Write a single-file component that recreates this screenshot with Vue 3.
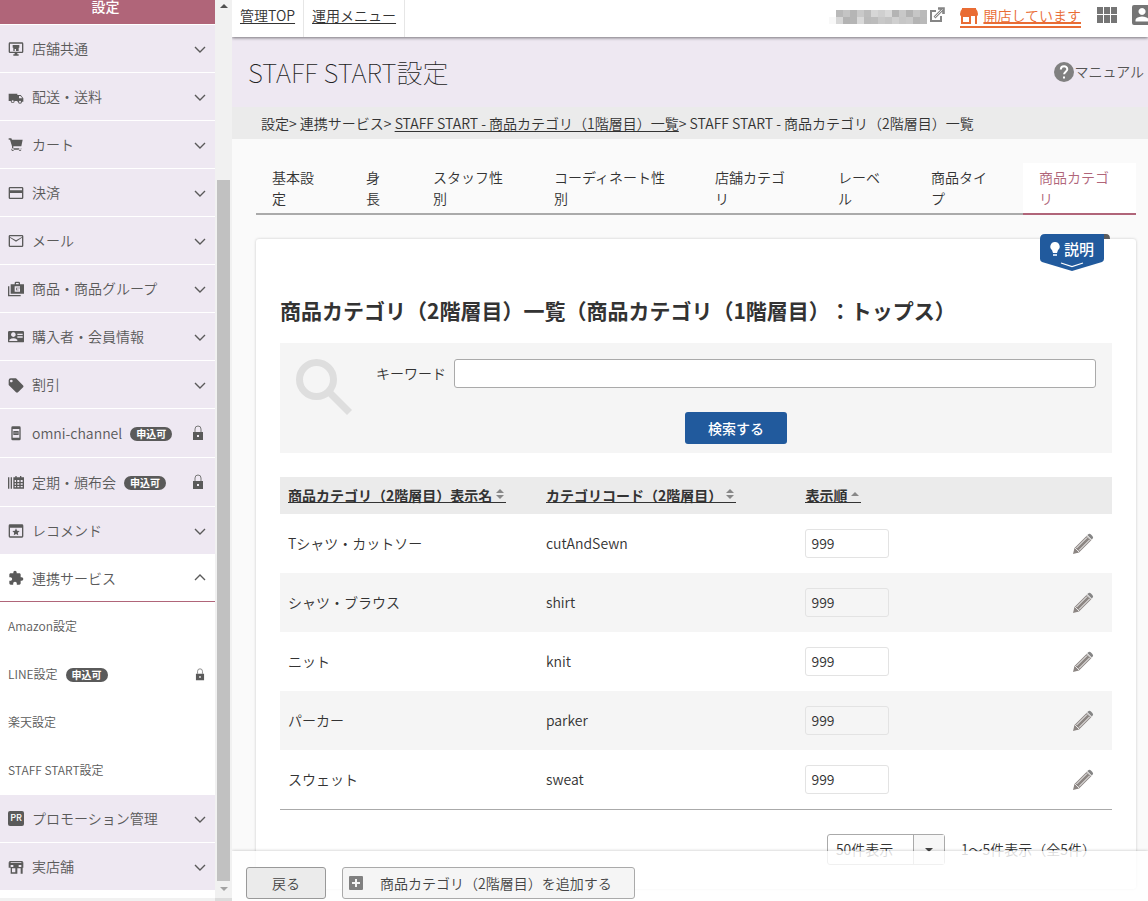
<script setup>
import { ref } from 'vue'

const upper = [
  { label: '店舗共通', icon: 'shop' },
  { label: '配送・送料', icon: 'truck' },
  { label: 'カート', icon: 'cart' },
  { label: '決済', icon: 'card' },
  { label: 'メール', icon: 'mail' },
  { label: '商品・商品グループ', icon: 'goods' },
  { label: '購入者・会員情報', icon: 'member' },
  { label: '割引', icon: 'tag' },
  { label: 'omni-channel', icon: 'phone', locked: true },
  { label: '定期・頒布会', icon: 'calendar', locked: true },
  { label: 'レコメンド', icon: 'star' },
  { label: '連携サービス', icon: 'puzzle', open: true },
]
const services = [
  { label: 'Amazon設定' },
  { label: 'LINE設定', locked: true },
  { label: '楽天設定' },
  { label: 'STAFF START設定' },
]
const lower = [
  { label: 'プロモーション管理', icon: 'pr' },
  { label: '実店舗', icon: 'store' },
]
const groups = [upper, lower]

const icons = {
  shop: 'M3 2h18q2 0 2 2v12q0 2-2 2h-7v2h2v2H8v-2h2v-2H3q-2 0-2-2V4q0-2 2-2zM3 4v12h18V4zM7 6h10v4h-1v5h-4v-3h-2v3H8v-5H7z',
  truck: 'M1 7h13v11h-4a3 3 0 0 1-6 0H1zM15 9h4l4 5v5h-2a3 3 0 0 1-6 0h-1V9zM16.500 10.500V14h5l-2.700-3.500zM5.500 18.500a1.500 1.500 0 1 0 3 0 1.500 1.500 0 0 0-3 0M16.500 19a1.500 1.500 0 1 0 3 0 1.500 1.500 0 0 0-3 0',
  cart: 'M1 2h4l1 2h16l-2 10H8v3h12v2H6v-5L3 4H1zM7 17a2 2 0 1 0 .1 0M18 17a2 2 0 1 0 .1 0',
  card: 'M3 3h18q2 0 2 2v14q0 2-2 2H3q-2 0-2-2V5q0-2 2-2zM3 5v3h18V5zM3 12v7h18v-7z',
  mail: 'M3 3h18q2 0 2 2v14q0 2-2 2H3q-2 0-2-2V5q0-2 2-2zM3 5v14h18V7l-9 6-9-6V6l9 5 9-5V5z',
  goods: 'M0 8h2v13h17v2H0zM4 5h6V3q0-2 2-2h4q2 0 2 2v2h6v14H4zM12 3v2h4V3zM10 8v8h8v-5h-5v2h3v1h-4v-4h6V8z',
  member: 'M2 3h20q2 0 2 2v14q0 1-2 1H2q-2 0-2-1V5q0-2 2-2zM8 5a3.500 3.500 0 1 0 .1 0M2 18h12v-2q-6-4-12 0zM14 7v2h8V7zM14 11v2h8v-2z',
  tag: 'M22 12 12 2H4Q1 2 1 5v7l11 11q1.500 1 3 0l8-8q1-1.500-1-3zM5 4a2 2 0 1 1-.1 0',
  phone: 'M7 2h10q2 0 2 2v17q0 2-2 2H7q-2 0-2-2V4q0-2 2-2zM7 6v13h10V6zM8 9h8v6H8zM10 11v2h1v-2zM13 11v2h1v-2z',
  calendar: 'M0 5h2v17H0zM4 5h2v17H4zM8 5h3V3h2v2h5V3h2v2h4v17H8zM10 9v3h2V9zM14 9v3h3V9zM19 9v3h3V9zM10 14v2h2v-2zM14 14v2h3v-2zM19 14v2h3v-2zM10 18v2h2v-2zM14 18v2h3v-2zM19 18v2h3v-2z',
  star: 'M3 2h18q2 0 2 2v16q0 2-2 2H3q-2 0-2-2V4q0-2 2-2zM3 7v13h18V7zM12 8l1.600 3.500 3.900.5-2.800 2.600.7 3.900-3.400-2-3.400 2 .7-3.900-2.800-2.600 3.900-.5z',
  puzzle: 'M20.500 11H19V7c0-1.100-.9-2-2-2h-4V3.500a2.500 2.500 0 0 0-5 0V5H4c-1.100 0-2 .9-2 2v3.800h1.500c1.500 0 2.700 1.200 2.700 2.700s-1.200 2.700-2.700 2.700H2V20c0 1.100.9 2 2 2h3.800v-1.500c0-1.500 1.200-2.700 2.700-2.700s2.700 1.200 2.700 2.700V22H17c1.100 0 2-.9 2-2v-4h1.500a2.500 2.500 0 0 0 0-5z',
  store: 'M2 3h20v2h1v8h-1v9h-3v-8h-5v8H4v-9H1V5h1zM4 5v1h16V5zM4 9v3h4V9zM16 9v3h4V9zM6 14v6h5v-6z',
}

const tabs = ['基本設定', '身長', 'スタッフ性別', 'コーディネート性別', '店舗カテゴリ', 'レーベル', '商品タイプ', '商品カテゴリ']

const rows = ref([
  { name: 'Tシャツ・カットソー', code: 'cutAndSewn', order: '999' },
  { name: 'シャツ・ブラウス', code: 'shirt', order: '999' },
  { name: 'ニット', code: 'knit', order: '999' },
  { name: 'パーカー', code: 'parker', order: '999' },
  { name: 'スウェット', code: 'sweat', order: '999' },
])
const keyword = ref('')
const mosaic = ['f2f2f2', 'b9b9b9', 'c4c4c4', 'b5b5b5', 'c9c9c9', 'bcbcbc', 'd6d6d6', 'cfcfcf', 'd9d9d9', 'b4b4b4', 'c8c8c8', 'b3b3b3', 'c6c6c6', 'bababa']
</script>

<template>
  <div class="shell">
    <nav class="sidebar" aria-label="設定">
      <div class="side-title">設定</div>
      <template v-for="(group, g) in groups" :key="g">
        <button
          v-for="item in group"
          :key="item.label"
          type="button"
          class="side-item"
          :class="{ locked: item.locked, open: item.open }"
        >
          <span v-if="item.icon === 'pr'" class="pr">PR</span>
          <svg v-else class="side-icon" viewBox="0 0 24 24" aria-hidden="true"><path fill-rule="evenodd" :d="icons[item.icon]" /></svg>
          <span>{{ item.label }}</span>
          <span v-if="item.locked" class="pill">申込可</span>
          <svg v-if="item.locked" class="lock" viewBox="0 0 12 16" aria-hidden="true">
            <path d="M3 7V4a3 3 0 0 1 6 0v3" fill="none" stroke="#777" />
            <path fill-rule="evenodd" d="M1 7h10v8H1zM5 10v2h2v-2z" />
          </svg>
          <svg v-else class="chevron" viewBox="0 0 12 8" aria-hidden="true"><path d="M1 2l5 5 5-5" /></svg>
        </button>
        <div v-if="g === 0" class="sub">
          <a v-for="s in services" :key="s.label" href="#" class="sub-item">
            <span>{{ s.label }}</span>
            <span v-if="s.locked" class="pill">申込可</span>
            <svg v-if="s.locked" class="lock small" viewBox="0 0 12 16" aria-hidden="true">
              <path d="M3 7V4a3 3 0 0 1 6 0v3" fill="none" stroke="#777" />
              <path fill-rule="evenodd" d="M1 7h10v8H1zM5 10v2h2v-2z" />
            </svg>
          </a>
        </div>
      </template>
      <div class="hbar"></div>
    </nav>
    <div class="scroll" aria-hidden="true">
      <svg viewBox="0 0 8 4"><path d="M0 4l4-4 4 4z" fill="#505050" /></svg>
      <div class="rail"><div class="thumb"></div></div>
      <svg viewBox="0 0 8 4"><path d="M0 0l4 4 4-4z" fill="#a3a3a3" /></svg>
      <div class="corner"></div>
    </div>

    <div class="main">
      <header class="topbar">
        <a href="#" class="nav-link">管理TOP</a>
        <a href="#" class="nav-link">運用メニュー</a>
        <div class="tools">
          <svg class="mosaic" width="98" height="14" viewBox="0 0 98 14" aria-hidden="true">
            <g v-for="(c, i) in mosaic" :key="i">
              <rect :x="i * 7" y="0" width="7" height="7" :fill="i ? '#' + c : '#fff'" />
              <rect :x="i * 7" y="7" width="7" height="7" :fill="i ? '#' + mosaic[(i * 5) % 13 + 1] : '#f8f8f8'" />
            </g>
          </svg>
          <svg class="external" viewBox="0 0 16 16" aria-hidden="true">
            <path d="M7 4H2v10h10V9" fill="none" stroke="#858585" stroke-width="2" />
            <path d="M5.500 10.500L14 2M9 1.500h5.500V7" fill="none" stroke="#858585" stroke-width="2.600" />
            <path d="M6 10l7.500-7.500" stroke="#fff" stroke-width=".8" />
          </svg>
          <a href="#" class="open-shop">
            <svg viewBox="0 0 18 16" aria-hidden="true"><path fill="#e96c34" fill-rule="evenodd" d="M2 0h14v1q2 2 2 5 0 2-1 2v8h-2V8h-4v8H1V8Q0 8 0 6q0-3 2-5zM3 9v5h6V9z" /></svg>
            <span>開店しています</span>
          </a>
          <svg class="apps" viewBox="0 0 20 16" aria-hidden="true"><path fill="#757575" d="M0 0h6v7H0zM7 0h6v7H7zM14 0h6v7h-6zM0 8h6v8H0zM7 8h6v8H7zM14 8h6v8h-6z" /></svg>
          <svg class="user" viewBox="0 0 20 20" aria-hidden="true"><path fill="#757575" fill-rule="evenodd" d="M2 0h16q2 0 2 2v16q0 2-2 2H2q-2 0-2-2V2q0-2 2-2zM10 3a3.500 3.500 0 1 0 .1 0zM3.500 16.500h13v-1.500q0-3-6.500-3.500-6.500.5-6.500 3.500z" /></svg>
        </div>
      </header>

      <div class="title-band">
        <h1>STAFF START設定</h1>
        <a href="#" class="manual">
          <svg viewBox="0 0 20 20" aria-hidden="true">
            <circle cx="10" cy="10" r="10" fill="#808080" />
            <path d="M6.800 7.500c0-4.300 6.500-4.300 6.500-.3 0 2.300-3.200 2.700-3.200 5" fill="none" stroke="#fff" stroke-width="2" />
            <path d="M9 14.500h2v2H9z" fill="#fff" />
          </svg>
          <span class="label">マニュアル</span>
        </a>
      </div>
      <div class="crumbs">設定&gt; 連携サービス&gt; <a href="#">STAFF START - 商品カテゴリ（1階層目）一覧</a>&gt; STAFF START - 商品カテゴリ（2階層目）一覧</div>

      <div class="content">
        <nav class="tabs" aria-label="STAFF START設定">
          <a v-for="(t, i) in tabs" :key="t" href="#" class="tab" :class="{ active: i === 7 }">{{ t }}</a>
        </nav>

        <section class="panel">
          <button type="button" class="explain">
            <svg viewBox="0 0 70 40" aria-hidden="true">
              <path d="M62 0h4q4 0 4 5h-8z" fill="#5c5c5c" />
              <path d="M5 0h59v25q0 2-2 3L32 37 2 28q-2-1-2-3V5q0-5 5-5z" fill="#215a9d" />
              <path d="M21 29l11 3.500L43 29" fill="none" stroke="#fff" stroke-width="1.200" />
              <path d="M15 8a4.500 4.500 0 0 0-3 8l1 3h4l1-3a4.500 4.500 0 0 0-3-8z" fill="#fff" />
              <path d="M13 20h4v2h-4z" fill="#c5d8ee" />
            </svg>
            <span>説明</span>
          </button>
          <h2>商品カテゴリ（2階層目）一覧（商品カテゴリ（1階層目）：トップス）</h2>

          <form class="search" @submit.prevent>
            <svg class="magnifier" viewBox="0 0 56 56" aria-hidden="true">
              <circle cx="20.500" cy="20.500" r="17" fill="none" stroke="#dedede" stroke-width="7" />
              <path d="M33 33l20.500 20.500" stroke="#dedede" stroke-width="7" />
            </svg>
            <div class="field">
              <label for="keyword" class="label">キーワード</label>
              <input id="keyword" v-model="keyword" type="text" />
            </div>
            <button type="submit" class="primary">検索する</button>
          </form>

          <table>
            <colgroup><col class="c1" /><col class="c2" /><col class="c2" /><col /></colgroup>
            <thead>
              <tr>
                <th scope="col"><a href="#">商品カテゴリ（2階層目）表示名<svg class="sort" viewBox="0 0 14 11" aria-hidden="true"><path d="M4 4l4-4 4 4zM4 6h8l-4 4z" /></svg></a></th>
                <th scope="col"><a href="#">カテゴリコード（2階層目）<svg class="sort" viewBox="0 0 14 11" aria-hidden="true"><path d="M4 4l4-4 4 4zM4 6h8l-4 4z" /></svg></a></th>
                <th scope="col"><a href="#">表示順<svg class="sort" viewBox="0 0 14 11" aria-hidden="true"><path d="M4 7l4-4 4 4z" /></svg></a></th>
                <th></th>
              </tr>
            </thead>
            <tbody>
              <tr v-for="r in rows" :key="r.code">
                <td><span class="label">{{ r.name }}</span></td>
                <td><span class="label">{{ r.code }}</span></td>
                <td><input v-model="r.order" type="text" :aria-label="r.name + ' 表示順'" /></td>
                <td class="edit">
                  <button type="button" :aria-label="r.name + ' 編集'">
                    <svg viewBox="0 0 22 22" aria-hidden="true">
                      <path d="M1 21l1.500-6L15 2.500l4.500 4.500L7 19.500z" fill="#8c8683" />
                      <path d="M4.500 15L15 4.500M7 17.500L17.500 7" stroke="#fff" stroke-width="1" />
                      <path d="M3 15.500L6.500 19l-3 .8-1.300-1.300z" fill="#8c8683" />
                      <path d="M3 15l4 4" stroke="#fff" stroke-width=".8" />
                      <path d="M16 1.500q1.500-1.500 3.200.2l1.200 1.200q1.500 1.500 0 3l-.6.6L15.300 2z" fill="#858585" />
                      <path d="M14.500 2.800L19 7.300" stroke="#fff" stroke-width=".7" />
                    </svg>
                  </button>
                </td>
              </tr>
            </tbody>
          </table>

          <div class="pager">
            <div class="select">
              <select aria-label="表示件数"><option>50件表示</option></select>
              <span class="arrow"><svg viewBox="0 0 8 4" aria-hidden="true"><path d="M0 0h8l-4 4z" /></svg></span>
            </div>
            <span class="label">1～5件表示（全5件）</span>
          </div>
        </section>
      </div>

      <footer class="actions">
        <button type="button" class="back">戻る</button>
        <button type="button" class="add">
          <svg viewBox="0 0 14 14" aria-hidden="true"><path fill="#808080" fill-rule="evenodd" d="M1 0h12q1 0 1 1v12q0 1-1 1H1q-1 0-1-1V1q0-1 1-1zM6 3v3H3v2h3v3h2V8h3V6H8V3z" /></svg>
          <span>商品カテゴリ（2階層目）を追加する</span>
        </button>
      </footer>
    </div>
  </div>
</template>

<style>
body { background: #fafafa; }
</style>

<style scoped>
.shell, .shell * { box-sizing: border-box; }
.shell {
  display: flex;
  height: 100vh;
  overflow: hidden;
  font-family: "Noto Sans CJK JP", sans-serif;
  font-size: 14px;
  font-weight: 350;
  line-height: 20px;
  text-spacing-trim: space-all;
  color: #333;
}
.shell button, .shell input, .shell select { font: inherit; color: inherit; margin: 0; }
a { color: inherit; }
svg { display: block; flex: none; }
.label { display: block; padding-bottom: 2px; }

.sidebar {
  width: 215px;
  flex: none;
  display: flex;
  flex-direction: column;
  overflow: hidden;
  background: #fff;
  color: #5a5a5a;
}
.side-title {
  flex: none;
  height: 25px;
  line-height: 12px;
  text-align: center;
  font-weight: 500;
  color: #fff;
  background: #b06579;
  border-bottom: 1px solid #fff;
  padding-right: 4px;
}
.side-item {
  flex: none;
  display: flex;
  align-items: center;
  width: 100%;
  height: 48px;
  padding: 0 8px;
  border: 0;
  border-bottom: 1px solid #fff;
  background: #eee8f2;
  text-align: left;
}
.side-item.locked { height: 49px; }
.side-item.open { height: 47px; background: #fff; border-bottom-color: #b06579; }
.side-icon { width: 16px; height: 16px; margin-right: 8px; fill: #5a5a5a; }
.pr {
  width: 16px;
  height: 15px;
  margin-right: 8px;
  border-radius: 2px;
  background: #5a5a5a;
  color: #fff;
  font-size: 9px;
  line-height: 14px;
  font-weight: 500;
  text-align: center;
}
.pill {
  width: 42px;
  height: 14px;
  margin: 2px 0 0 8px;
  border-radius: 7px;
  background: #5a5a5a;
  color: #fff;
  font-size: 10px;
  line-height: 14px;
  font-weight: 700;
  text-align: center;
}
.lock { width: 12px; height: 16px; margin: 0 3px 0 auto; fill: #5a5a5a; }
.lock.small { width: 10px; height: 13px; margin-right: 2px; }
.chevron { width: 12px; height: 8px; margin: 0 1px 0 auto; fill: none; stroke: #5a5a5a; stroke-width: 1.4; }
.open .chevron { transform: rotate(180deg); }
.side-item > span:not(.pill):not(.pr) { padding-bottom: 1px; }
.sub { flex: none; padding-bottom: 1px; }
.sub-item {
  display: flex;
  align-items: center;
  height: 48px;
  padding: 0 8px;
  font-size: 12px;
  text-decoration: none;
}
.hbar { flex: none; height: 3px; margin-top: auto; background: #f1f1f1; }

.scroll {
  width: 17px;
  flex: none;
  display: flex;
  flex-direction: column;
  align-items: center;
  background: #f1f1f1;
  padding-top: 4px;
}
.scroll svg { width: 8px; height: 4px; }
.rail { flex: 1; width: 13px; padding-top: 172px; margin-bottom: 6px; }
.thumb { height: 100%; background: #c1c1c1; }
.corner { width: 100%; height: 3px; margin-top: 7px; background: #dcdcdc; }

.main { flex: 1; min-width: 0; position: relative; overflow: hidden; background: #fafafa; }
.topbar {
  position: relative;
  display: flex;
  height: 37px;
  background: #fff;
  box-shadow: 0 1px 3px rgba(0, 0, 0, .5);
}
.nav-link { padding: 5px 8px 0; border-right: 1px solid #e6e6e6; text-underline-offset: 2px; }
.tools { display: flex; align-items: flex-start; margin-left: auto; margin-right: -4px; padding-top: 5px; }
.mosaic { margin-top: 5px; }
.external { width: 16px; height: 16px; margin: 2px 15px 0 2px; }
.open-shop {
  display: flex;
  gap: 5px;
  height: 23px;
  color: #e96c34;
  border-bottom: 2px solid #e96c34;
}
.open-shop span { text-decoration: underline; text-underline-offset: 2px; }
.open-shop svg { width: 18px; height: 16px; margin-top: 3px; }
.apps { width: 20px; height: 16px; margin: 2px 15px 0 16px; }
.user { width: 20px; height: 20px; }

.title-band {
  display: flex;
  align-items: center;
  justify-content: space-between;
  height: 70px;
  padding: 0 4px 0 16px;
  background: #eee8f2;
}
h1 { margin: 0; font-size: 26px; line-height: 40px; font-weight: 100; color: #222; }
.manual { display: flex; align-items: center; text-decoration: none; color: #555; }
.manual svg { width: 20px; height: 20px; }
.crumbs { height: 32px; padding-left: 29px; line-height: 32px; background: #ebebeb; white-space: nowrap; }
.crumbs a { text-underline-offset: 2px; }

.content { padding: 24px 12px 0 24px; }
.tabs {
  display: grid;
  grid-template-columns: 94fr 67fr 121fr 161fr 123fr 93fr 108fr 113fr;
}
.tab {
  min-width: 0;
  height: 52px;
  padding: 4px 25px 0 16px;
  line-height: 21px;
  text-decoration: none;
  border-bottom: 2px solid #aaa;
}
.tab.active { color: #b06579; background: #fff; border-bottom-color: #b06579; }

.panel {
  position: relative;
  margin-top: 24px;
  padding: 55px 24px 24px;
  background: #fff;
  border-radius: 3px;
  box-shadow: 0 0 3px rgba(0, 0, 0, .2);
}
.explain {
  position: absolute;
  top: -5px;
  right: 26px;
  width: 70px;
  height: 40px;
  padding: 0;
  border: 0;
  background: none;
}
.explain svg { width: 70px; height: 40px; }
.explain span {
  position: absolute;
  left: 24px;
  top: 5px;
  color: #fff;
  font-size: 15px;
  font-weight: 500;
}
h2 { margin: 0 0 17px; font-size: 21px; line-height: 32px; font-weight: 700; white-space: nowrap; }

.search {
  display: grid;
  grid-template-columns: 56px 1fr;
  grid-template-rows: 29px 32px;
  gap: 24px;
  height: 110px;
  padding: 16px;
  background: #f5f5f5;
}
.magnifier { width: 56px; height: 56px; grid-area: 1 / 1 / span 2; }
.field { grid-area: 1 / 2; display: flex; align-items: center; gap: 8px; }
.field input {
  flex: 1;
  min-width: 0;
  height: 29px;
  padding: 0 8px;
  border: 1px solid #aaa;
  border-radius: 3px;
  background: #fff;
}
.primary {
  grid-area: 2 / 2;
  justify-self: center;
  width: 102px;
  height: 32px;
  border: 0;
  border-radius: 3px;
  background: #215a9d;
}
.search .primary { color: #fff; font-weight: 500; }

table {
  width: 100%;
  margin-top: 24px;
  border-collapse: separate;
  border-spacing: 0;
  border-bottom: 1px solid #aaa;
  table-layout: fixed;
}
.c1 { width: 31%; }
.c2 { width: 31.2%; }
th, td { padding: 0 8px; text-align: left; vertical-align: middle; }
th { height: 37px; padding-bottom: 2px; background: #ebebeb; font-weight: 700; white-space: nowrap; }
th a {
  display: inline-flex;
  align-items: center;
  height: 16px;
  line-height: 14px;
  text-decoration: none;
  border-bottom: 1px solid #333;
}
.sort { width: 14px; height: 11px; fill: #888; }
td { height: 59px; }
tbody tr:nth-child(even) { background: #f5f5f5; }
td input {
  display: block;
  width: 84px;
  height: 29px;
  padding: 0 5px 2px;
  border: 1px solid #e3e3e3;
  border-radius: 3px;
  background: #fff;
}
tbody tr:nth-child(even) input { background: transparent; }
.edit button { display: block; padding: 0; border: 0; background: none; }
.shell .edit button { margin: 0 10px 0 auto; }
.edit svg { width: 22px; height: 22px; }

.pager { display: flex; justify-content: flex-end; align-items: center; gap: 16px; margin-top: 24px; padding-right: 16px; }
.select { position: relative; width: 118px; height: 31px; }
.select select {
  width: 100%;
  height: 100%;
  padding: 0 8px 2px;
  appearance: none;
  border: 1px solid #aaa;
  border-radius: 3px;
  background: #fff;
}
.arrow {
  position: absolute;
  top: 1px;
  right: 1px;
  bottom: 1px;
  width: 31px;
  display: flex;
  align-items: center;
  justify-content: center;
  border-left: 1px solid #aaa;
  background: #f7f7f7;
  pointer-events: none;
}
.arrow svg { width: 8px; height: 4px; fill: #444; }

.actions {
  position: absolute;
  left: 0;
  right: 0;
  bottom: 0;
  display: flex;
  gap: 16px;
  padding: 16px 14px 2px;
  background: rgba(255, 255, 255, .82);
  box-shadow: 0 0 3px rgba(0, 0, 0, .25);
}
.actions button { height: 32px; border-radius: 3px; color: #444; }
.actions .back { width: 80px; border: 1px solid #999; background: #ebebeb; }
.actions .add { display: flex; align-items: center; gap: 17px; padding: 0 22px 0 6px; border: 1px solid #aaa; background: #f5f5f5; }
.add svg { width: 14px; height: 14px; }
</style>
